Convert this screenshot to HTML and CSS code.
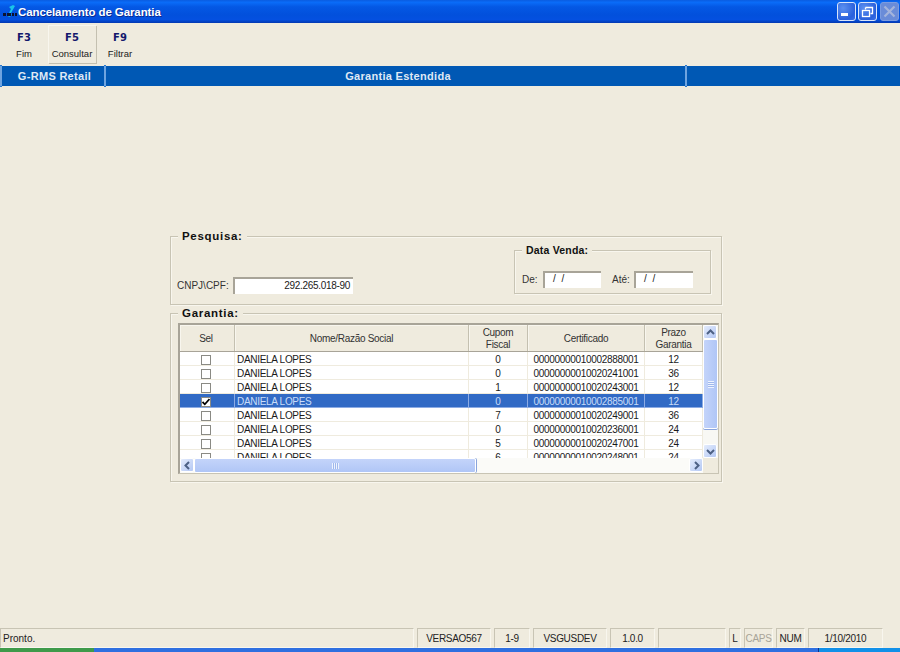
FILE: index.html
```html
<!DOCTYPE html>
<html lang="pt">
<head>
<meta charset="utf-8">
<title>Cancelamento de Garantia</title>
<link rel="stylesheet" href="styles.css">
</head>
<body>
<div class="window">
  <header class="titlebar">
    <svg class="appicon" width="16" height="16" viewBox="0 0 16 16"><path d="M7 3L11 1L13 2L9 9L7 9L9 5Z" fill="#19c4e8"/><path d="M6 13L8 10L10 10L8 13Z" fill="#19a8d8"/><path d="M1 9h3v3H1zM5 9h4v3H5zM10 9h2v3h-2zM13 9h2v3h-2z" fill="#0c1430"/></svg>
    <span class="title">Cancelamento de Garantia</span>
    <div class="winbtns">
      <span class="winbtn"><svg width="19" height="19" viewBox="0 0 19 19"><rect x="4" y="11" width="7" height="3" fill="#fff"/></svg></span>
      <span class="winbtn"><svg width="19" height="19" viewBox="0 0 19 19"><path d="M7.500 5.500h7v6h-2M7.500 5.500v2" fill="none" stroke="#fff" stroke-width="1.300"/><rect x="4.500" y="8.500" width="7" height="6" fill="none" stroke="#fff" stroke-width="1.300"/></svg></span>
      <span class="winbtn off"><svg width="19" height="19" viewBox="0 0 19 19"><path d="M4.500 4.500l10 10M14.500 4.500l-10 10" stroke="#a4b4dc" stroke-width="2.200"/></svg></span>
    </div>
  </header>

  <nav class="toolbar">
    <div class="tool"><b>F3</b><span>Fim</span></div>
    <div class="tool active"><b>F5</b><span>Consultar</span></div>
    <div class="tool"><b>F9</b><span>Filtrar</span></div>
  </nav>

  <div class="banner">
    <div class="cell c-app">G-RMS Retail</div>
    <div class="cell c-mod">Garantia Estendida</div>
    <div class="cell c-end"></div>
  </div>

  <main class="content">
    <section class="group search">
      <h2 class="legend">Pesquisa:</h2>
      <div class="field cpf"><label>CNPJ\CPF:</label><div class="input right w-cpf">292.265.018-90</div></div>
      <section class="group dates">
        <h3 class="legend small">Data Venda:</h3>
        <div class="field"><label>De:</label><div class="input w-date">/ /</div><label class="ate">Até:</label><div class="input w-date">/ /</div></div>
      </section>
    </section>

    <section class="group warranty">
      <h2 class="legend">Garantia:</h2>
      <div class="grid">
        <div class="viewport">
          <div class="row head">
            <div>Sel</div><div>Nome/Razão Social</div><div>Cupom<br>Fiscal</div><div>Certificado</div><div>Prazo<br>Garantia</div>
          </div>
          <div class="row"><div><i class="cb"></i></div><div class="l">DANIELA LOPES</div><div>0</div><div>00000000010002888001</div><div>12</div></div>
          <div class="row"><div><i class="cb"></i></div><div class="l">DANIELA LOPES</div><div>0</div><div>00000000010020241001</div><div>36</div></div>
          <div class="row"><div><i class="cb"></i></div><div class="l">DANIELA LOPES</div><div>1</div><div>00000000010020243001</div><div>12</div></div>
          <div class="row sel"><div><i class="cb"><svg width="8" height="8" viewBox="0 0 8 8"><path d="M0.500 4l2.300 2.300L7.500 1" fill="none" stroke="#000" stroke-width="1.800"/></svg></i></div><div class="l">DANIELA LOPES</div><div>0</div><div>00000000010002885001</div><div>12</div></div>
          <div class="row"><div><i class="cb"></i></div><div class="l">DANIELA LOPES</div><div>7</div><div>00000000010020249001</div><div>36</div></div>
          <div class="row"><div><i class="cb"></i></div><div class="l">DANIELA LOPES</div><div>0</div><div>00000000010020236001</div><div>24</div></div>
          <div class="row"><div><i class="cb"></i></div><div class="l">DANIELA LOPES</div><div>5</div><div>00000000010020247001</div><div>24</div></div>
          <div class="row"><div><i class="cb"></i></div><div class="l">DANIELA LOPES</div><div>6</div><div>00000000010020248001</div><div>24</div></div>
        </div>
        <div class="vscroll">
          <span class="sbtn"><svg width="9" height="7" viewBox="0 0 9 7"><path d="M1 5l3.500-3.500L8 5" fill="none" stroke="#4d6185" stroke-width="2"/></svg></span>
          <span class="vthumb"><em></em></span>
          <span class="strack"></span>
          <span class="sbtn"><svg width="9" height="7" viewBox="0 0 9 7"><path d="M1 2l3.500 3.500L8 2" fill="none" stroke="#4d6185" stroke-width="2"/></svg></span>
        </div>
        <div class="hscroll">
          <span class="sbtn"><svg width="7" height="9" viewBox="0 0 7 9"><path d="M5 1L1.500 4.500L5 8" fill="none" stroke="#4d6185" stroke-width="2"/></svg></span>
          <span class="hthumb"><em></em></span>
          <span class="strack"></span>
          <span class="sbtn"><svg width="7" height="9" viewBox="0 0 7 9"><path d="M2 1l3.500 3.500L2 8" fill="none" stroke="#4d6185" stroke-width="2"/></svg></span>
        </div>
      </div>
    </section>
  </main>

  <footer class="status">
    <div class="pane p-msg">Pronto.</div>
    <div class="pane c p-ver">VERSAO567</div>
    <div class="pane c p-rng">1-9</div>
    <div class="pane c p-usr">VSGUSDEV</div>
    <div class="pane c p-num">1.0.0</div>
    <div class="pane c p-emp"></div>
    <div class="pane c p-l">L</div>
    <div class="pane c p-caps">CAPS</div>
    <div class="pane c p-nl">NUM</div>
    <div class="pane c p-date">1/10/2010</div>
  </footer>
  <div class="taskbar"><span class="start"></span><span class="tray"></span></div>
</div>
</body>
</html>
```

FILE: styles.css
```css
* { box-sizing: border-box; }
html, body { margin: 0; height: 100%; }
body { background: #efebde; font: 10px/12px "Liberation Sans", Arial, sans-serif; color: #1a1a1a; overflow: hidden; }
.window { width: 900px; height: 652px; display: flex; flex-direction: column; }

.titlebar { height: 23px; flex: none; display: flex; align-items: center; padding: 0 0 0 2px; color: #fff;
  background: linear-gradient(180deg, #0a5ce0 0%, #0a6cf8 10%, #0458e4 30%, #0250dc 65%, #0450e0 85%, #0338b0 100%); }
.appicon { flex: none; }
.title { font: bold 11.5px/14px "Liberation Sans", sans-serif; letter-spacing: -0.1px; text-shadow: 1px 1px #0a2a90; }
.winbtns { margin-left: auto; display: flex; gap: 2px; padding-right: 1px; }
.winbtn { width: 19px; height: 19px; border: 1px solid #d8e4fa; border-radius: 3px; background: radial-gradient(circle at 30% 30%, #5c90f0, #2a60dc 70%, #3a70e8); overflow: hidden; display: block; }
.winbtn svg { display: block; margin: -1px; }
.winbtn.off { background: #6a8cd8; border-color: #7c9ce0; margin-left: 1px; }

.toolbar { height: 43px; flex: none; display: flex; padding: 2px 0 0 0; }
.tool { width: 48px; height: 38px; display: flex; flex-direction: column; align-items: center; padding-top: 7px; gap: 4px; }
.tool b { font: bold 10px/12px "DejaVu Sans", sans-serif; color: #14186c; }
.tool span { font-size: 9.5px; line-height: 11px; color: #222; }
.tool.active { box-shadow: inset 1px 1px #f8f6ee, 1px 1px #c4c0b0; }

.banner { height: 20px; flex: none; background: #0058b4; display: flex; color: #dfe8f4; font: bold 11px/20px "Liberation Sans", sans-serif; letter-spacing: 0.3px; }
.cell { text-align: center; position: relative; }
.c-app { width: 106px; padding-left: 3px; }
.c-mod { width: 581px; padding-left: 3px; }
.c-end { flex: 1; }
.c-app::before, .c-app::after, .c-mod::after { content: ""; position: absolute; top: -1px; bottom: -1px; width: 2px; background: #6ea4e0; border-top: 1px solid #2a78cc; border-bottom: 1px solid #2a78cc; }
.c-app::before { left: 0; }
.c-app::after, .c-mod::after { right: 0; }

.content { flex: 1; min-height: 0; padding: 150px 178px 0 170px; display: flex; flex-direction: column; gap: 8px; }
.group { position: relative; border: 1px solid #c8c4b4; box-shadow: inset 1px 1px #f8f6ee, 1px 1px #f8f6ee; }
.legend { position: absolute; left: 7px; top: -7px; margin: 0; padding: 0 4px; background: #efebde; font: bold 11.5px/13px "Liberation Sans", sans-serif; letter-spacing: 0.7px; color: #111; }
.legend.small { left: 7px; font-size: 10.5px; letter-spacing: 0.2px; }
.search { height: 69px; padding: 0 10px 10px 6px; display: flex; justify-content: space-between; align-items: flex-end; }
.field { display: flex; align-items: center; }
.field label { color: #333; }
.cpf label { width: 56px; }
.input { height: 17px; background: #fff; border-top: 2px solid #a8a498; border-left: 2px solid #a8a498; padding: 0 3px; line-height: 14px; letter-spacing: -0.3px; }
.right { text-align: right; }
.w-cpf { width: 120px; }
.w-date { width: 58px; padding-left: 8px; word-spacing: 3px; letter-spacing: 0; line-height: 11px; }
.dates { width: 197px; height: 44px; padding: 20px 0 0 7px; }
.dates label { width: 21px; }
.dates label.ate { width: 22px; margin-left: 11px; }
.dates .input:last-child { width: 59px; }

.warranty { height: 169px; padding: 9px 0 0 7px; }
.grid { width: 541px; height: 151px; border: 1px solid #c8c4b4; border-top: 2px solid #a8a498; border-left: 2px solid #a8a498; background: #efebde;
  display: grid; grid-template-columns: 523px 15px; grid-template-rows: 133px 15px; }
.viewport { overflow: hidden; background: #fff; }
.row { display: grid; grid-template-columns: 55px 234px 59px 117px 58px; height: 14px; border-bottom: 1px solid #efebde; line-height: 15px; text-align: center; letter-spacing: -0.3px; }
.row > div { border-right: 1px solid #efebde; white-space: nowrap; overflow: hidden; }
.row > div.l { text-align: left; padding-left: 2px; }
.row > div:first-child { padding-right: 2px; }
.head { height: 27px; background: #efebde; border-bottom: 1px solid #a8a498; color: #333; line-height: 12px; }
.head > div { display: flex; align-items: center; justify-content: center; padding-top: 2px; border-right: 1px solid #c4c0b0; box-shadow: inset 1px 1px #f8f6ee; }
.row.sel { background: #316ac5; color: #c8dcf8; border-bottom-color: #8cabe4; }
.sel > div { border-right-color: #8cabe4; }
.cb { display: block; width: 10px; height: 10px; margin: 3px auto 0; border: 1px solid #8a8a84; background: #fff; }
.cb svg { display: block; }

.vscroll { display: flex; flex-direction: column; background: #f8f8f4; }
.hscroll { display: flex; background: #fbfbf8; }
.sbtn { flex: none; width: 14px; height: 14px; border: 1px solid #fff; border-radius: 2px; background: linear-gradient(135deg, #e4ecfc, #b4c8f4); display: flex; align-items: center; justify-content: center; }
.strack { flex: 1; }
.vthumb { height: 90px; flex: none; border: 1px solid #fff; border-radius: 2px; background: linear-gradient(90deg, #c4d4fa, #b0c6f6); box-shadow: 0 1px #8aa4dc; display: flex; align-items: center; justify-content: center; }
.vthumb em { width: 6px; height: 7px; background: repeating-linear-gradient(180deg, #eef3fe 0 1px, #a0b8ec 1px 2px); }
.hthumb { width: 282px; flex: none; border: 1px solid #fff; border-radius: 2px; background: linear-gradient(180deg, #c4d4fa, #b0c6f6); box-shadow: 1px 0 #8aa4dc; display: flex; align-items: center; justify-content: center; }
.hthumb em { width: 7px; height: 6px; background: repeating-linear-gradient(90deg, #eef3fe 0 1px, #a0b8ec 1px 2px); }

.status { height: 20px; flex: none; display: flex; gap: 3px; padding-right: 17px; }
.pane { border: 1px solid; border-color: #c8c4b4 #f8f6ee #f8f6ee #c8c4b4; line-height: 19px; white-space: nowrap; color: #222; }
.pane.c { text-align: center; letter-spacing: -0.3px; }
.p-msg { width: 414px; padding-left: 2px; }
.p-ver { width: 74px; }
.p-rng { width: 36px; }
.p-usr { width: 74px; }
.p-num { width: 45px; }
.p-emp { width: 68px; }
.p-l { width: 12px; }
.p-caps { width: 29px; color: #a8a498; }
.p-nl { width: 29px; }
.p-date { width: 75px; }

.taskbar { height: 4px; flex: none; background: #2f6fe0; display: flex; }
.start { width: 94px; background: #3f9a4a; }
.tray { margin-left: auto; width: 82px; background: #1290e8; border-left: 1px solid #10308c; }
```
